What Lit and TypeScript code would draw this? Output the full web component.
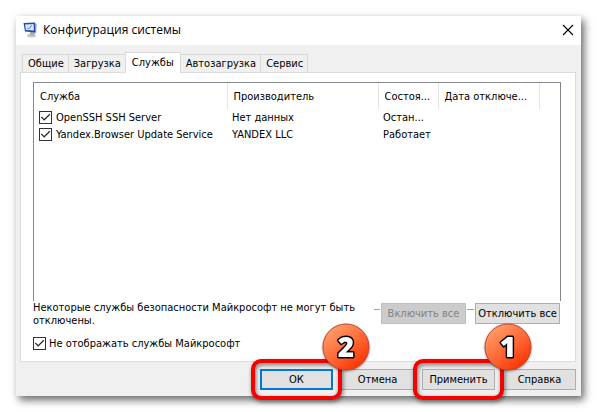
import { LitElement, html, css, svg } from "lit";
import { customElement, property, state } from "lit/decorators.js";
import { classMap } from "lit/directives/class-map.js";

interface Service {
  name: string;
  vendor: string;
  status: string;
  disabledOn: string;
}

const TABS = ["Общие", "Загрузка", "Службы", "Автозагрузка", "Сервис"];
const COLUMNS = ["Служба", "Производитель", "Состоя...", "Дата отключе..."];
const SERVICES: Service[] = [
  { name: "OpenSSH SSH Server", vendor: "Нет данных", status: "Остан...", disabledOn: "" },
  { name: "Yandex.Browser Update Service", vendor: "YANDEX LLC", status: "Работает", disabledOn: "" },
];

/** Numbered round marker of a tutorial step. */
@customElement("step-badge")
export class StepBadge extends LitElement {
  @property() value = "";

  static styles = css`
    :host {
      display: block;
    }
    svg {
      display: block;
      width: 48px;
      height: 48px;
      overflow: visible;
      filter: drop-shadow(0 1px 1px #0006);
    }
    text {
      font: 800 28px "Open Sans", sans-serif;
      text-anchor: middle;
      fill: #fff;
      stroke: #000;
      stroke-width: 3px;
      stroke-linejoin: round;
      paint-order: stroke;
    }
  `;

  render() {
    return html`<svg viewBox="0 0 48 48">
      ${svg`<defs>
        <linearGradient id="fill" x1="0.15" y1="0.1" x2="0.8" y2="0.95">
          <stop offset="0" stop-color="#ff9d68" />
          <stop offset="0.5" stop-color="#ff6a38" />
          <stop offset="1" stop-color="#fa3200" />
        </linearGradient>
      </defs>
      <circle cx="24" cy="24" r="23" fill="url(#fill)" stroke="#c2452c" stroke-width="1" />
      <text x="24" y="34">${this.value}</text>`}
    </svg>`;
  }
}

@customElement("app-root")
export class AppRoot extends LitElement {
  @state() private tab = "Службы";

  static styles = css`
    :host {
      display: flex;
      box-sizing: border-box;
      min-height: 100vh;
      padding: 16px;
      background: #fff;
      color: #000;
      font: 11px/13px "DejaVu Sans Condensed", "DejaVu Sans", sans-serif;
      font-stretch: condensed;
    }
    button,
    input {
      font: inherit;
      color: inherit;
      margin: 0;
    }
    .window {
      flex: 1;
      display: flex;
      flex-direction: column;
      min-width: 0;
      background: #f0f0f0;
      box-shadow: 3px 4px 8px #0009;
    }
    .titlebar {
      display: flex;
      align-items: center;
      height: 27px;
      padding: 0 7px 2px;
      background: #fff;
    }
    .titlebar svg {
      display: block;
    }
    .title {
      flex: 1;
      margin: 0 0 0 5px;
      font: 400 12px/16px "Open Sans", sans-serif;
    }
    .close {
      display: flex;
      padding: 0;
      border: 0;
      background: none;
    }
    .body {
      flex: 1;
      display: flex;
      flex-direction: column;
      padding: 7px 5px 6px 4px;
    }
    .tabs {
      display: flex;
      align-items: flex-end;
      padding: 0 2px;
    }
    .tab {
      height: 18px;
      padding: 0 4px 0 5px;
      border: 1px solid #d9d9d9;
      border-bottom: 0;
      margin-right: -1px;
      background: #f0f0f0;
      white-space: nowrap;
    }
    .tab.active {
      position: relative;
      height: 21px;
      padding: 0 6px 2px;
      margin-bottom: -1px;
      background: #fff;
    }
    .pane {
      flex: 1;
      display: flex;
      flex-direction: column;
      padding: 9px 14px 11px 12px;
      border: 1px solid #dcdcdc;
      background: #fff;
    }
    .list {
      flex: 1;
      border: 1px solid #828790;
      border-bottom: 0;
    }
    table {
      width: 100%;
      border-collapse: collapse;
      table-layout: fixed;
    }
    .c1 {
      width: 193px;
    }
    .c2 {
      width: 151px;
    }
    .c3 {
      width: 60px;
    }
    .c4 {
      width: 101px;
    }
    th,
    td {
      padding: 0 0 0 5px;
      text-align: left;
      font-weight: 400;
      white-space: nowrap;
    }
    th {
      height: 26px;
      padding-left: 6px;
      border-right: 1px solid #e5e5e5;
    }
    th:last-child {
      border-right: 0;
    }
    td {
      height: 17px;
    }
    .check {
      display: flex;
      align-items: center;
      gap: 4px;
    }
    .pane > .check {
      gap: 3px;
    }
    .check input {
      appearance: none;
      flex: none;
      width: 13px;
      height: 13px;
      border: 1px solid #333;
      background: #fff;
    }
    .check input:checked::before {
      content: "";
      display: block;
      width: 11px;
      height: 11px;
      background: #222;
      clip-path: polygon(8% 48%, 16% 40%, 38% 64%, 85% 16%, 93% 25%, 38% 80%);
    }
    .note {
      display: flex;
      align-items: flex-start;
      margin-bottom: 10px;
    }
    .note p {
      flex: 1;
      margin: 0;
    }
    .bulk {
      display: flex;
      align-items: flex-start;
      padding: 2px 1px 0 0;
    }
    .bulk::before,
    .rule {
      content: "";
      width: 6px;
      height: 1px;
      margin: 6px 1px 0 0;
      background: #a0a0a0;
    }
    .rule {
      width: 7px;
      margin-left: 1px;
    }
    .push {
      height: 21px;
      padding: 0;
      border: 1px solid #adadad;
      background: #e1e1e1;
      white-space: nowrap;
    }
    .push.wide {
      width: 85px;
    }
    .push:disabled {
      border-color: #bfbfbf;
      background: #ccc;
      color: #838383;
    }
    .push.default {
      border: 2px solid #0078d7;
    }
    .footer {
      display: flex;
      justify-content: flex-end;
      gap: 8px;
      padding-top: 7px;
    }
    .slot {
      position: relative;
      display: flex;
    }
    .slot .push {
      width: 73px;
    }
    .marked {
      z-index: 1;
    }
    .marked::after {
      content: "";
      position: absolute;
      inset: -10px -9px;
      border: 4px solid #f60000;
      border-radius: 10px;
      filter: drop-shadow(1px 2px 2px #0008);
      pointer-events: none;
    }
    step-badge {
      position: absolute;
      z-index: 2;
      right: -37px;
      bottom: 19px;
    }
  `;

  private renderSlot(label: string, step = "", isDefault = false) {
    return html`<div class=${classMap({ slot: true, marked: step !== "" })}>
      <button class=${classMap({ push: true, default: isDefault })}>${label}</button>
      ${step ? html`<step-badge value=${step}></step-badge>` : ""}
    </div>`;
  }

  render() {
    return html`
      <main class="window">
        <header class="titlebar">
          <svg width="15" height="16" viewBox="0 0 15 16">
            <ellipse cx="8.500" cy="13.500" rx="4.500" ry="2" fill="#c9c9c9" />
            <path d="M7 10L12 9L11 13.500L7 13Z" fill="#aaa" />
            <path d="M12 1L14 2L13 11L10.500 12Z" fill="#b5b8c4" />
            <path d="M0.500 1L12 0.500L12.500 10.500L2 9.500Z" fill="#2746b8" />
            <path d="M2 2.500L10.500 2L11 8.500L3 8Z" fill="#d5ebff" />
            <path d="M4.500 6L5.700 7L8.800 3.200" fill="none" stroke="#3b78d8" />
          </svg>
          <h1 class="title">Конфигурация системы</h1>
          <button class="close" aria-label="Закрыть">
            <svg width="12" height="12" viewBox="0 0 12 12">
              <path d="M1 1L11 11M11 1L1 11" stroke="#000" stroke-width="1.100" />
            </svg>
          </button>
        </header>
        <div class="body">
          <div class="tabs" role="tablist">
            ${TABS.map(
              (t) => html`<button
                role="tab"
                class=${classMap({ tab: true, active: t === this.tab })}
                aria-selected=${t === this.tab}
                @click=${() => (this.tab = t)}
              >${t}</button>`
            )}
          </div>
          <section class="pane">
            <div class="list">
              <table>
                <colgroup>
                  <col class="c1" /><col class="c2" /><col class="c3" /><col class="c4" /><col />
                </colgroup>
                <thead>
                  <tr>${COLUMNS.map((c) => html`<th scope="col">${c}</th>`)}<th></th></tr>
                </thead>
                <tbody>
                  ${SERVICES.map(
                    (s) => html`<tr>
                      <td><label class="check"><input type="checkbox" checked />${s.name}</label></td>
                      <td>${s.vendor}</td>
                      <td>${s.status}</td>
                      <td>${s.disabledOn}</td>
                      <td></td>
                    </tr>`
                  )}
                </tbody>
              </table>
            </div>
            <div class="note">
              <p>Некоторые службы безопасности Майкрософт не могут быть<br />отключены.</p>
              <div class="bulk">
                <button class="push wide" disabled>Включить все</button>
                <span class="rule"></span>
                <button class="push wide">Отключить все</button>
              </div>
            </div>
            <label class="check"><input type="checkbox" checked />Не отображать службы Майкрософт</label>
          </section>
          <footer class="footer">
            ${this.renderSlot("ОК", "2", true)} ${this.renderSlot("Отмена")}
            ${this.renderSlot("Применить", "1")} ${this.renderSlot("Справка")}
          </footer>
        </div>
      </main>
    `;
  }
}
